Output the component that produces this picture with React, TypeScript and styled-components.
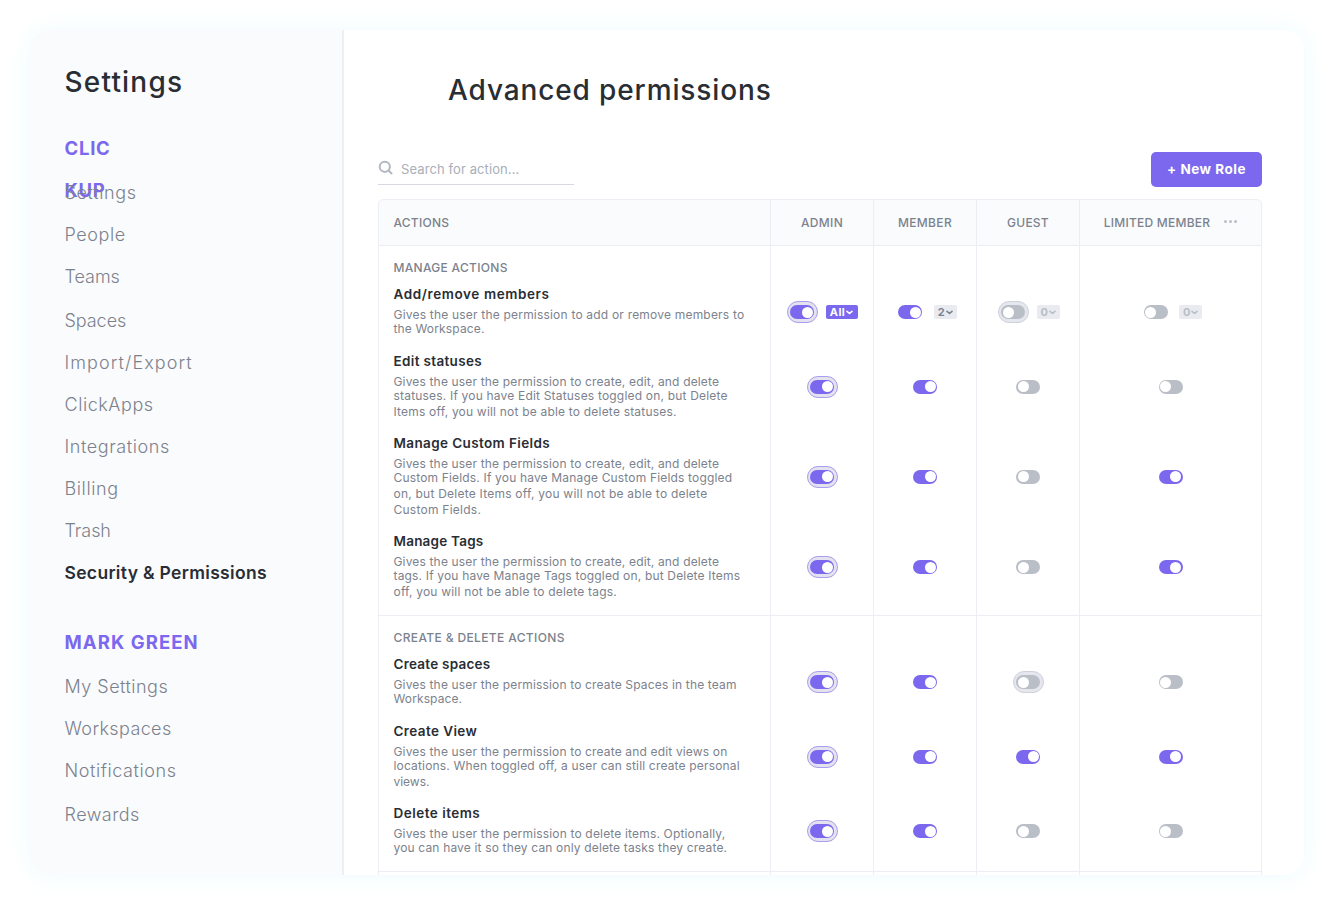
import React from 'react';
import styled, { createGlobalStyle, css } from 'styled-components';

const color = {
  ink: '#292d34',
  muted: '#7c828d',
  faint: '#b9bec7',
  line: '#edeef3',
  panel: '#fafbfd',
  purple: '#7b68ee',
  chip: '#e9ebf0',
};

const GlobalStyle = createGlobalStyle`
  * { box-sizing: border-box; }
  body {
    margin: 0;
    background: #fff;
    font-family: Inter, "Liberation Sans", sans-serif;
    color: ${color.ink};
  }
  h1, h2, h3, p, ul { margin: 0; padding: 0; font-weight: inherit; }
  ul { list-style: none; }
`;

const Page = styled.div`
  height: 906px;
  padding: 30px 30px 31px;
  overflow: hidden;
`;

const Card = styled.div`
  display: flex;
  height: 845px;
  border-radius: 20px;
  background: #fff;
  box-shadow: 0 0 24px 2px #f0fcff;
`;

const Sidebar = styled.aside`
  flex: none;
  width: 314px;
  padding: 31px 0 0 34.5px;
  background: ${color.panel};
  border-right: 2px solid #eeeff5;
  border-radius: 20px 0 0 20px;
`;

const Title = styled.h1<{ $track: number }>`
  font-size: 28px;
  font-weight: 540;
  line-height: 42px;
  white-space: nowrap;
  letter-spacing: ${(p) => p.$track}px;
`;

const GroupTitle = styled.h2<{ $track: number; $height: number }>`
  height: ${(p) => p.$height}px;
  font-size: 18.5px;
  font-weight: 700;
  line-height: 42px;
  color: ${color.purple};
  letter-spacing: ${(p) => p.$track}px;
`;

const WorkspaceGroup = styled.section`
  margin-top: 24.4px;
  margin-bottom: 27px;
`;

const UserGroup = styled.section``;

const NavItem = styled.li<{ $track: number; $gap?: boolean; $active?: boolean }>`
  position: relative;
  margin-top: ${(p) => (p.$gap ? 2 : 0)}px;
  font-size: 18px;
  font-weight: 350;
  line-height: 42px;
  white-space: nowrap;
  color: ${color.muted};
  letter-spacing: ${(p) => p.$track}px;
  ${(p) =>
    p.$active &&
    css`
      font-size: 17.5px;
      font-weight: 600;
      color: ${color.ink};
    `}
`;

const Main = styled.main`
  flex: 1;
  min-width: 0;
  padding: 39px 42px 0 34px;
  overflow: hidden;
`;

const Heading = styled.div`
  padding-left: 70px;
`;

const Toolbar = styled.div`
  display: flex;
  justify-content: space-between;
  align-items: flex-start;
  height: 48px;
  margin-top: 40px;
`;

const SearchBox = styled.label`
  display: flex;
  align-items: center;
  gap: 7px;
  width: 196px;
  height: 34px;
  border-bottom: 1px solid #d6d9e4;
`;

const SearchText = styled.span`
  padding-top: 2px;
  font-size: 13px;
  font-weight: 380;
  line-height: 20px;
  letter-spacing: 0.1px;
  color: #a9aeb9;
`;

const NewRole = styled.button`
  width: 111px;
  height: 35px;
  margin-top: 1px;
  padding: 0;
  border: 0;
  border-radius: 5px;
  background: ${color.purple};
  color: #fff;
  font: 700 13.5px/35px Inter, sans-serif;
  letter-spacing: 0.5px;
`;

const Table = styled.div`
  border-left: 1px solid ${color.line};
  border-right: 1px solid ${color.line};
  border-radius: 5px 5px 0 0;
`;

const columns = css`
  display: grid;
  grid-template-columns: 391px 103px 103px 103px 182px;
`;

const HeaderRow = styled.div`
  ${columns}
  height: 47px;
  border-top: 1px solid ${color.line};
  border-bottom: 1px solid ${color.line};
  border-radius: 5px 5px 0 0;
  background: ${color.panel};
`;

const Cell = styled.div`
  display: flex;
  align-items: center;
  justify-content: center;
  border-left: 1px solid ${color.line};
`;

const ColumnName = styled.span<{ $track: number }>`
  padding-top: 1px;
  font-size: 12px;
  font-weight: 500;
  line-height: 18px;
  color: ${color.muted};
  letter-spacing: ${(p) => p.$track}px;
`;

const NameCell = styled.div`
  display: flex;
  align-items: center;
  padding-left: 14.5px;
`;

const Dots = styled.span`
  display: flex;
  gap: 2px;
  margin: 0 0 2px 14px;
  i {
    width: 3px;
    height: 3px;
    border-radius: 50%;
    background: ${color.faint};
  }
`;

const Section = styled.section`
  ${columns}
  border-bottom: 1px solid ${color.line};
`;

const SectionNames = styled.div`
  padding-left: 14.5px;
`;

const SectionLabel = styled.h2<{ $track: number }>`
  height: 39px;
  font-size: 12px;
  font-weight: 500;
  line-height: 43px;
  color: ${color.muted};
  letter-spacing: ${(p) => p.$track}px;
`;

const Action = styled.div<{ $height: number }>`
  height: ${(p) => p.$height}px;
`;

const ActionName = styled.h3<{ $track: number }>`
  margin-bottom: 3.6px;
  font-size: 13.5px;
  font-weight: 600;
  line-height: 18px;
  letter-spacing: ${(p) => p.$track - 0.28}px;
`;

const Line = styled.p<{ $track: number }>`
  font-size: 12px;
  font-weight: 380;
  line-height: 16px;
  white-space: nowrap;
  color: ${color.muted};
  letter-spacing: ${(p) => p.$track - 0.05}px;
  &:nth-of-type(2) { margin-top: -2px; }
`;

const RoleColumn = styled.div`
  padding-top: 39px;
  border-left: 1px solid ${color.line};
`;

const Slot = styled.div<{ $height: number }>`
  display: flex;
  align-items: center;
  justify-content: center;
  gap: 8px;
  height: ${(p) => p.$height}px;
  padding-bottom: 13px;
`;

const Ring = styled.span<{ $show?: boolean; $on: boolean }>`
  display: flex;
  align-items: center;
  justify-content: center;
  width: 31px;
  height: 22px;
  border: 1px solid transparent;
  border-radius: 11px;
  ${(p) =>
    p.$show &&
    css`
      border-color: ${p.$on ? '#a99df0' : '#cfd1db'};
      background: ${p.$on ? '#e3e2ee' : '#e6e7ee'};
    `}
`;

const Pill = styled.span<{ $on: boolean }>`
  display: flex;
  justify-content: ${(p) => (p.$on ? 'flex-end' : 'flex-start')};
  align-items: center;
  width: 24px;
  height: 14px;
  padding: 0 1.5px;
  border-radius: 7px;
  background: ${(p) => (p.$on ? color.purple : color.faint)};
`;

const Knob = styled.span`
  width: 11px;
  height: 11px;
  border-radius: 50%;
  background: #fff;
`;

type Tone = 'solid' | 'plain' | 'off';

const Badge = styled.span<{ $tone: Tone }>`
  display: flex;
  align-items: center;
  justify-content: center;
  gap: 1px;
  width: ${(p) => (p.$tone === 'solid' ? 32 : 23)}px;
  height: 14px;
  margin-right: ${(p) => (p.$tone === 'solid' ? 0 : -1.5)}px;
  border-radius: 2px;
  font-size: 11px;
  font-weight: 700;
  line-height: 14px;
  letter-spacing: ${(p) => (p.$tone === 'solid' ? 0.4 : 0)}px;
  background: ${(p) => (p.$tone === 'solid' ? color.purple : color.chip)};
  color: ${(p) => ({ solid: '#fff', plain: color.muted, off: color.faint })[p.$tone]};
`;

type Nav = { label: string; track: number; gap?: boolean; active?: boolean };

const workspaceNav: Nav[] = [
  { label: 'Settings', track: 0.65 },
  { label: 'People', track: 0.6 },
  { label: 'Teams', track: -0.05 },
  { label: 'Spaces', track: -0.05, gap: true },
  { label: 'Import/Export', track: 1.08 },
  { label: 'ClickApps', track: 0.55 },
  { label: 'Integrations', track: 0.58 },
  { label: 'Billing', track: 0.6 },
  { label: 'Trash', track: -0.05 },
  { label: 'Security & Permissions', track: 0.32, active: true },
];

const userNav: Nav[] = [
  { label: 'My Settings', track: 0.48 },
  { label: 'Workspaces', track: 0.38 },
  { label: 'Notifications', track: 0.58 },
  { label: 'Rewards', track: 0.45, gap: true },
];

type Text = [string, number];
type ToggleState = { on: boolean; ring?: boolean; badge?: string; tone?: Tone };
type ActionData = { name: Text; lines: Text[]; height: number; roles: ToggleState[] };

const on: ToggleState = { on: true };
const off: ToggleState = { on: false };
const locked: ToggleState = { on: true, ring: true };
const lockedOff: ToggleState = { on: false, ring: true };

const sections: { label: Text; actions: ActionData[] }[] = [
  {
    label: ['MANAGE ACTIONS', 0.3],
    actions: [
      {
        name: ['Add/remove members', 0.88],
        lines: [
          ['Gives the user the permission to add or remove members to', 0.25],
          ['the Workspace.', 0.2],
        ],
        height: 67,
        roles: [
          { ...locked, badge: 'All', tone: 'solid' },
          { ...on, badge: '2', tone: 'plain' },
          { ...lockedOff, badge: '0', tone: 'off' },
          { ...off, badge: '0', tone: 'off' },
        ],
      },
      {
        name: ['Edit statuses', 0.62],
        lines: [
          ['Gives the user the permission to create, edit, and delete', 0.21],
          ['statuses. If you have Edit Statuses toggled on, but Delete', 0.24],
          ['Items off, you will not be able to delete statuses.', 0.25],
        ],
        height: 82,
        roles: [locked, on, off, off],
      },
      {
        name: ['Manage Custom Fields', 0.66],
        lines: [
          ['Gives the user the permission to create, edit, and delete', 0.21],
          ['Custom Fields. If you have Manage Custom Fields toggled', 0.22],
          ['on, but Delete Items off, you will not be able to delete', 0.28],
          ['Custom Fields.', 0.3],
        ],
        height: 98,
        roles: [locked, on, off, on],
      },
      {
        name: ['Manage Tags', 0.5],
        lines: [
          ['Gives the user the permission to create, edit, and delete', 0.21],
          ['tags. If you have Manage Tags toggled on, but Delete Items', 0.22],
          ['off, you will not be able to delete tags.', 0.25],
        ],
        height: 83,
        roles: [locked, on, off, on],
      },
    ],
  },
  {
    label: ['CREATE & DELETE ACTIONS', 0.37],
    actions: [
      {
        name: ['Create spaces', 0.52],
        lines: [
          ['Gives the user the permission to create Spaces in the team', 0.21],
          ['Workspace.', 0.16],
        ],
        height: 67,
        roles: [locked, on, lockedOff, off],
      },
      {
        name: ['Create View', 0.68],
        lines: [
          ['Gives the user the permission to create and edit views on', 0.21],
          ['locations. When toggled off, a user can still create personal', 0.22],
          ['views.', 0.02],
        ],
        height: 82,
        roles: [locked, on, on, on],
      },
      {
        name: ['Delete items', 0.76],
        lines: [
          ['Gives the user the permission to delete items. Optionally,', 0.22],
          ['you can have it so they can only delete tasks they create.', 0.21],
        ],
        height: 67,
        roles: [locked, on, off, off],
      },
    ],
  },
];

const SearchIcon = () => (
  <svg width="16" height="16" viewBox="0 0 16 16" fill="none" stroke="#b3b7c2" strokeWidth="2" strokeLinecap="round">
    <circle cx="6.8" cy="6.8" r="5.1" />
    <path d="M10.8 10.8l2.8 2.6" />
  </svg>
);

const Chevron = () => (
  <svg width="7" height="5" viewBox="0 0 7 5" fill="none" stroke="currentColor" strokeWidth="1.6" strokeLinecap="round" strokeLinejoin="round">
    <path d="M1 1.3l2.5 2.2L6 1.3" />
  </svg>
);

const Toggle = ({ state }: { state: ToggleState }) => (
  <>
    <Ring $show={state.ring} $on={state.on}>
      <Pill $on={state.on}>
        <Knob />
      </Pill>
    </Ring>
    {state.badge && (
      <Badge $tone={state.tone!}>
        {state.badge}
        <Chevron />
      </Badge>
    )}
  </>
);

const NavList = ({ items }: { items: Nav[] }) => (
  <ul>
    {items.map((n) => (
      <NavItem key={n.label} $track={n.track} $gap={n.gap} $active={n.active}>
        {n.label}
      </NavItem>
    ))}
  </ul>
);

const roleNames: Text[] = [
  ['ADMIN', 0.35],
  ['MEMBER', 0.35],
  ['GUEST', 0.25],
];

export default function App() {
  return (
    <Page>
      <GlobalStyle />
      <Card>
        <Sidebar>
          <Title as="h2" $track={1.2}>Settings</Title>
          <WorkspaceGroup>
            <GroupTitle $track={0.75} $height={45}>
              CLIC
              <br />
              KUP
            </GroupTitle>
            <NavList items={workspaceNav} />
          </WorkspaceGroup>
          <UserGroup>
            <GroupTitle $track={1.08} $height={45}>MARK GREEN</GroupTitle>
            <NavList items={userNav} />
          </UserGroup>
        </Sidebar>
        <Main>
          <Heading>
            <Title $track={0.88}>Advanced permissions</Title>
          </Heading>
          <Toolbar>
            <SearchBox>
              <SearchIcon />
              <SearchText>Search for action...</SearchText>
            </SearchBox>
            <NewRole>+ New Role</NewRole>
          </Toolbar>
          <Table>
            <HeaderRow>
              <NameCell>
                <ColumnName $track={0.25}>ACTIONS</ColumnName>
              </NameCell>
              {roleNames.map(([name, track]) => (
                <Cell key={name}>
                  <ColumnName $track={track}>{name}</ColumnName>
                </Cell>
              ))}
              <Cell>
                <ColumnName $track={0.25}>LIMITED MEMBER</ColumnName>
                <Dots>
                  <i />
                  <i />
                  <i />
                </Dots>
              </Cell>
            </HeaderRow>
            {sections.map((s) => (
              <Section key={s.label[0]}>
                <SectionNames>
                  <SectionLabel $track={s.label[1]}>{s.label[0]}</SectionLabel>
                  {s.actions.map((a) => (
                    <Action key={a.name[0]} $height={a.height}>
                      <ActionName $track={a.name[1]}>{a.name[0]}</ActionName>
                      {a.lines.map(([text, track]) => (
                        <Line key={text} $track={track}>{text}</Line>
                      ))}
                    </Action>
                  ))}
                </SectionNames>
                {[0, 1, 2, 3].map((role) => (
                  <RoleColumn key={role}>
                    {s.actions.map((a) => (
                      <Slot key={a.name[0]} $height={a.height}>
                        <Toggle state={a.roles[role]} />
                      </Slot>
                    ))}
                  </RoleColumn>
                ))}
              </Section>
            ))}
            <Section>
              <SectionNames />
              {[0, 1, 2, 3].map((role) => (
                <RoleColumn key={role} />
              ))}
            </Section>
          </Table>
        </Main>
      </Card>
    </Page>
  );
}
